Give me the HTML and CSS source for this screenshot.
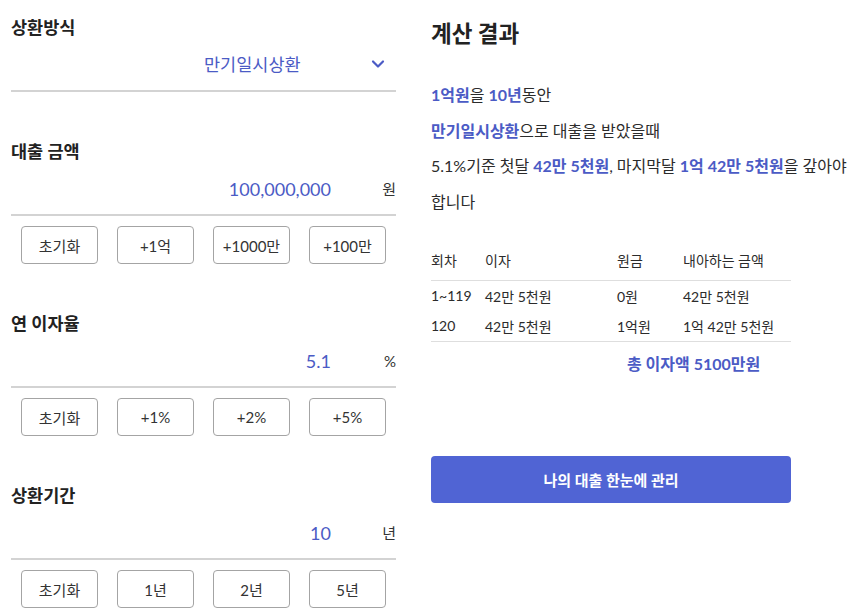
FILE: index.html
```html
<!DOCTYPE html>
<html lang="ko">
<head>
<meta charset="utf-8">
<link rel="stylesheet" href="styles.css">
</head>
<body>
<div class="page">
  <div class="form">
    <section class="group first">
      <h2 class="label">상환방식</h2>
      <div class="field select">
        <span class="select-text">만기일시상환</span>
        <svg class="chev" width="14" height="10" viewBox="0 0 14 10"><path d="M2 2.5 L7 7.5 L12 2.5" fill="none" stroke="#4b5bc5" stroke-width="2.2" stroke-linecap="round" stroke-linejoin="round"/></svg>
      </div>
    </section>

    <section class="group">
      <h2 class="label">대출 금액</h2>
      <div class="field">
        <span class="value">100,000,000</span>
        <span class="unit">원</span>
      </div>
      <div class="btns">
        <button class="btn">초기화</button>
        <button class="btn">+1억</button>
        <button class="btn">+1000만</button>
        <button class="btn">+100만</button>
      </div>
    </section>

    <section class="group">
      <h2 class="label">연 이자율</h2>
      <div class="field">
        <span class="value">5.1</span>
        <span class="unit">%</span>
      </div>
      <div class="btns">
        <button class="btn">초기화</button>
        <button class="btn">+1%</button>
        <button class="btn">+2%</button>
        <button class="btn">+5%</button>
      </div>
    </section>

    <section class="group">
      <h2 class="label">상환기간</h2>
      <div class="field">
        <span class="value">10</span>
        <span class="unit">년</span>
      </div>
      <div class="btns">
        <button class="btn">초기화</button>
        <button class="btn">1년</button>
        <button class="btn">2년</button>
        <button class="btn">5년</button>
      </div>
    </section>
  </div>

  <div class="result">
    <h1 class="result-title">계산 결과</h1>
    <div class="summary">
      <p class="line"><b class="hl">1억원</b>을 <b class="hl">10년</b>동안</p>
      <p class="line"><b class="hl">만기일시상환</b>으로 대출을 받았을때</p>
      <p class="line">5.1%기준 첫달 <b class="hl">42만 5천원</b>, 마지막달 <b class="hl">1억 42만 5천원</b>을 갚아야 합니다</p>
    </div>
    <table class="table">
      <thead>
        <tr><th class="c1">회차</th><th class="c2">이자</th><th class="c3">원금</th><th class="c4">내아하는 금액</th></tr>
      </thead>
      <tbody>
        <tr class="r1"><td>1~119</td><td>42만 5천원</td><td>0원</td><td>42만 5천원</td></tr>
        <tr class="r2"><td>120</td><td>42만 5천원</td><td>1억원</td><td>1억 42만 5천원</td></tr>
      </tbody>
    </table>
    <div class="total">총 이자액 5100만원</div>
    <button class="cta">나의 대출 한눈에 관리</button>
  </div>
</div>
</body>
</html>
```

FILE: styles.css
```css
* { box-sizing: border-box; }
html, body { margin: 0; padding: 0; background: #fff; }
body {
  font-family: "Lato", "Noto Sans CJK KR", sans-serif;
  color: #2b2b2b;
  width: 856px;
  height: 616px;
  overflow: hidden;
}
.page {
  display: flex;
  padding-left: 11px;
}
.form {
  width: 385px;
  flex: none;
  padding-top: 16px;
}
.group { margin-top: 48px; }
.group.first { margin-top: 0; }
.group:nth-child(2) { margin-top: 48px; }
.label {
  margin: 0;
  font-size: 17.5px;
  font-weight: 700;
  line-height: 24px;
  height: 24px;
  color: #222;
}
.field {
  height: 52px;
  border-bottom: 2px solid #d3d3d3;
  display: flex;
  align-items: center;
  justify-content: flex-end;
}
.field.select { justify-content: flex-start; height: 52px; }
.select-text {
  margin-left: 193px;
  font-size: 17.5px;
  color: #4b5bc5;
  line-height: 24px;
}
.chev { margin-left: 70px; margin-top: -2px; }
.value {
  font-size: 18px;
  color: #4b5bc5;
  line-height: 24px;
}
.unit {
  width: 65px;
  text-align: right;
  font-size: 15px;
  color: #333;
  line-height: 24px;
}
.btns {
  display: flex;
  justify-content: space-between;
  padding: 0 10px;
  margin-top: 10px;
}
.btn {
  width: 77px;
  height: 38px;
  border: 1px solid #a4a4a4;
  border-radius: 4px;
  background: #fff;
  font-family: "Lato", "Noto Sans CJK KR", sans-serif;
  font-size: 15px;
  color: #333;
  padding: 0;
}

.result {
  margin-left: 35px;
  padding-top: 19px;
  width: 425px;
  flex: none;
}
.result-title {
  margin: 0;
  font-size: 22.5px;
  font-weight: 700;
  line-height: 30px;
  color: #222;
}
.summary {
  margin-top: 28px;
  font-size: 16px;
  line-height: 35.6px;
  color: #2b2b2b;
  word-break: keep-all;
}
.line { margin: 0; }
.hl { color: #4b5bc5; font-weight: 700; }
.table {
  margin-top: 20px;
  width: 360px;
  border-collapse: collapse;
  font-size: 14px;
  color: #2b2b2b;
}
.table th {
  font-weight: 400;
  text-align: left;
  height: 41px;
  padding: 0;
  vertical-align: middle;
  border-bottom: 1px solid #dedede;
}
.table td { padding: 0; height: 30px; vertical-align: middle; }
.table tbody tr:last-child td { border-bottom: 1px solid #dedede; height: 31px; }
.c1 { width: 54px; }
.c2 { width: 132px; }
.c3 { width: 66px; }
.total {
  width: 360px;
  padding-left: 196px;
  font-size: 16px;
  font-weight: 700;
  color: #4b5bc5;
  line-height: 22px;
  margin-top: 11px;
}
.cta {
  display: block;
  margin-top: 81px;
  width: 360px;
  height: 47px;
  border: none;
  border-radius: 4px;
  background: #5064d4;
  color: #fff;
  font-family: "Lato", "Noto Sans CJK KR", sans-serif;
  font-size: 15px;
  font-weight: 700;
}
```
